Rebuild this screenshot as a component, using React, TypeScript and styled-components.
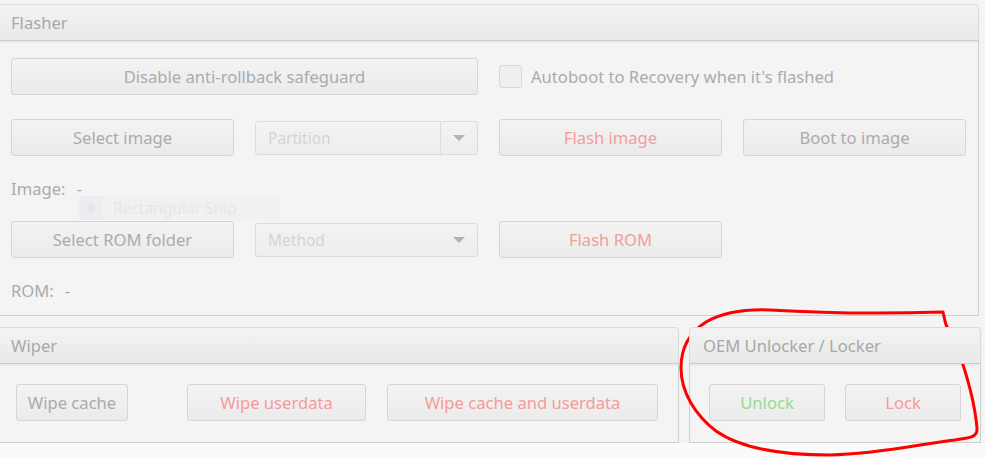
import styled, { createGlobalStyle } from "styled-components";

const GlobalStyle = createGlobalStyle`
    html, body {
        margin: 0;
        padding: 0;
        background: #ffffff;
    }
    body {
        font-family: "Noto Sans", "Open Sans", sans-serif;
    }
`;

const Page = styled.div`
    position: relative;
    width: 985px;
    height: 458px;
    overflow: hidden;
    background: #fafafa;
`;

const Window = styled.div`
    height: 443px;
    box-sizing: border-box;
    padding-top: 4px;
    margin-left: -2px;
    background: #f4f4f4;
`;

const Pane = styled.section<{ $w: number }>`
    width: ${(p) => p.$w}px;
    display: flex;
    flex-direction: column;
`;

const PaneTitle = styled.div<{ $pl: number }>`
    height: 37px;
    box-sizing: border-box;
    display: flex;
    align-items: center;
    padding-left: ${(p) => p.$pl}px;
    border: 1px solid #dadada;
    border-bottom-color: #cacaca;
    border-radius: 4px 4px 0 0;
    background: linear-gradient(#f3f3f3, #e9e9e9);
    box-shadow: 0 2px 2px rgba(0, 0, 0, 0.04);
    color: #a8a8a8;
    font-size: 16.6px;
    position: relative;
    z-index: 1;
`;

const PaneBody = styled.div<{ $h: number }>`
    height: ${(p) => p.$h}px;
    box-sizing: border-box;
    border: 1px solid #cfcfcf;
    border-top: none;
    background: #f4f4f4;
`;

const FlasherBody = styled(PaneBody)`
    padding: 16px 0 0 12px;
    display: flex;
    flex-direction: column;
`;

const Row = styled.div<{ $mt: number }>`
    display: grid;
    grid-template-columns: repeat(4, 223px);
    column-gap: 21px;
    height: 37px;
    margin-top: ${(p) => p.$mt}px;
    align-items: center;
`;

const Button = styled.div<{ $span?: number; $tone?: "red" | "green" }>`
    grid-column: span ${(p) => p.$span ?? 1};
    height: 37px;
    box-sizing: border-box;
    display: flex;
    align-items: center;
    justify-content: center;
    border: 1px solid #d5d5d5;
    border-radius: 3px;
    background: linear-gradient(#f3f3f3, #ebebeb);
    color: ${(p) =>
        p.$tone === "red" ? "#f59b9b" : p.$tone === "green" ? "#92dd92" : "#ababab"};
    font-size: 16.6px;
    white-space: nowrap;
`;

const Combo = styled.div`
    height: 34px;
    box-sizing: border-box;
    display: flex;
    align-items: stretch;
    border: 1px solid #dcdcdc;
    border-radius: 3px;
    background: linear-gradient(#f3f3f3, #ededed);
    color: #d4d4d4;
    font-size: 15.5px;
`;

const ComboText = styled.div`
    flex: 1;
    display: flex;
    align-items: center;
    padding-left: 12px;
`;

const ArrowBox = styled.div<{ $divider?: boolean }>`
    width: 36px;
    display: flex;
    align-items: center;
    justify-content: center;
    border-left: ${(p) => (p.$divider ? "1px solid #dcdcdc" : "none")};
    &::after {
        content: "";
        border-left: 6px solid transparent;
        border-right: 6px solid transparent;
        border-top: 6px solid #b3b3b3;
    }
`;

const CheckRow = styled.label`
    grid-column: span 2;
    display: flex;
    align-items: center;
    gap: 9px;
    color: #ababab;
    font-size: 16.6px;
`;

const CheckBox = styled.span`
    width: 23px;
    height: 23px;
    box-sizing: border-box;
    border: 1px solid #d8d8d8;
    border-radius: 3px;
    background: #efefef;
`;

const InfoLine = styled.div`
    display: flex;
    gap: 11px;
    height: 22px;
    align-items: center;
    margin-top: 21px;
    color: #ababab;
    font-size: 16.6px;
`;

const BottomRow = styled.div`
    display: flex;
    gap: 10px;
    margin-top: 11px;
`;

const ButtonBar = styled.div<{ $pl: number }>`
    display: flex;
    align-items: flex-start;
    padding: 20px 0 0 ${(p) => p.$pl}px;
`;

const BarButton = styled(Button)<{ $w: number; $ml: number }>`
    width: ${(p) => p.$w}px;
    margin-left: ${(p) => p.$ml}px;
    flex: none;
`;

const SnipGhost = styled.div`
    position: absolute;
    left: 79px;
    top: 196px;
    width: 201px;
    height: 24px;
    display: flex;
    align-items: center;
    gap: 11px;
    background: #eff1f3;
    color: #e5e7e9;
    font-size: 15.5px;
`;

const SnipIcon = styled.span`
    width: 23px;
    height: 24px;
    display: flex;
    align-items: center;
    justify-content: center;
    background: #ebedf0;
    &::after {
        content: "";
        width: 8px;
        height: 8px;
        border-radius: 50%;
        background: #e3e5e8;
    }
`;

const Scribble = styled.svg`
    position: absolute;
    left: 0;
    top: 0;
    pointer-events: none;
`;

export default function App() {
    return (
        <Page>
            <GlobalStyle />
            <Window>
                <Pane $w={981}>
                    <PaneTitle $pl={12}>Flasher</PaneTitle>
                    <FlasherBody $h={275}>
                        <Row $mt={1}>
                            <Button $span={2}>Disable anti-rollback safeguard</Button>
                            <CheckRow>
                                <CheckBox />
                                Autoboot to Recovery when it's flashed
                            </CheckRow>
                        </Row>
                        <Row $mt={24}>
                            <Button>Select image</Button>
                            <Combo>
                                <ComboText>Partition</ComboText>
                                <ArrowBox $divider />
                            </Combo>
                            <Button $tone="red">Flash image</Button>
                            <Button>Boot to image</Button>
                        </Row>
                        <InfoLine>
                            <span>Image:</span>
                            <span>-</span>
                        </InfoLine>
                        <Row $mt={22}>
                            <Button>Select ROM folder</Button>
                            <Combo>
                                <ComboText>Method</ComboText>
                                <ArrowBox />
                            </Combo>
                            <Button $tone="red">Flash ROM</Button>
                        </Row>
                        <InfoLine>
                            <span>ROM:</span>
                            <span>-</span>
                        </InfoLine>
                    </FlasherBody>
                </Pane>
                <BottomRow>
                    <Pane $w={681}>
                        <PaneTitle $pl={12}>Wiper</PaneTitle>
                        <PaneBody $h={79}>
                            <ButtonBar $pl={17}>
                                <BarButton $w={112} $ml={0}>Wipe cache</BarButton>
                                <BarButton $w={179} $ml={59} $tone="red">Wipe userdata</BarButton>
                                <BarButton $w={271} $ml={21} $tone="red">
                                    Wipe cache and userdata
                                </BarButton>
                            </ButtonBar>
                        </PaneBody>
                    </Pane>
                    <Pane $w={292}>
                        <PaneTitle $pl={13}>OEM Unlocker / Locker</PaneTitle>
                        <PaneBody $h={79}>
                            <ButtonBar $pl={19}>
                                <BarButton $w={116} $ml={0} $tone="green">Unlock</BarButton>
                                <BarButton $w={116} $ml={20} $tone="red">Lock</BarButton>
                            </ButtonBar>
                        </PaneBody>
                    </Pane>
                </BottomRow>
            </Window>
            <SnipGhost>
                <SnipIcon />
                Rectangular Snip
            </SnipGhost>
            <Scribble width={985} height={458} viewBox="0 0 985 458">
                <path
                    d="M 943 312 C 880 314, 820 313, 770 310 C 745 309, 722 313, 706 322 C 690 332, 681 348, 681 368 C 681 392, 695 415, 716 431 C 740 448, 780 455, 830 455 C 880 454, 920 444, 955 440 C 968 438, 978 438, 977 428 C 975 405, 966 372, 957 347 C 952 334, 946 328, 945 321 Z"
                    fill="none"
                    stroke="#ff0000"
                    strokeWidth={3}
                    strokeLinejoin="round"
                />
            </Scribble>
        </Page>
    );
}
